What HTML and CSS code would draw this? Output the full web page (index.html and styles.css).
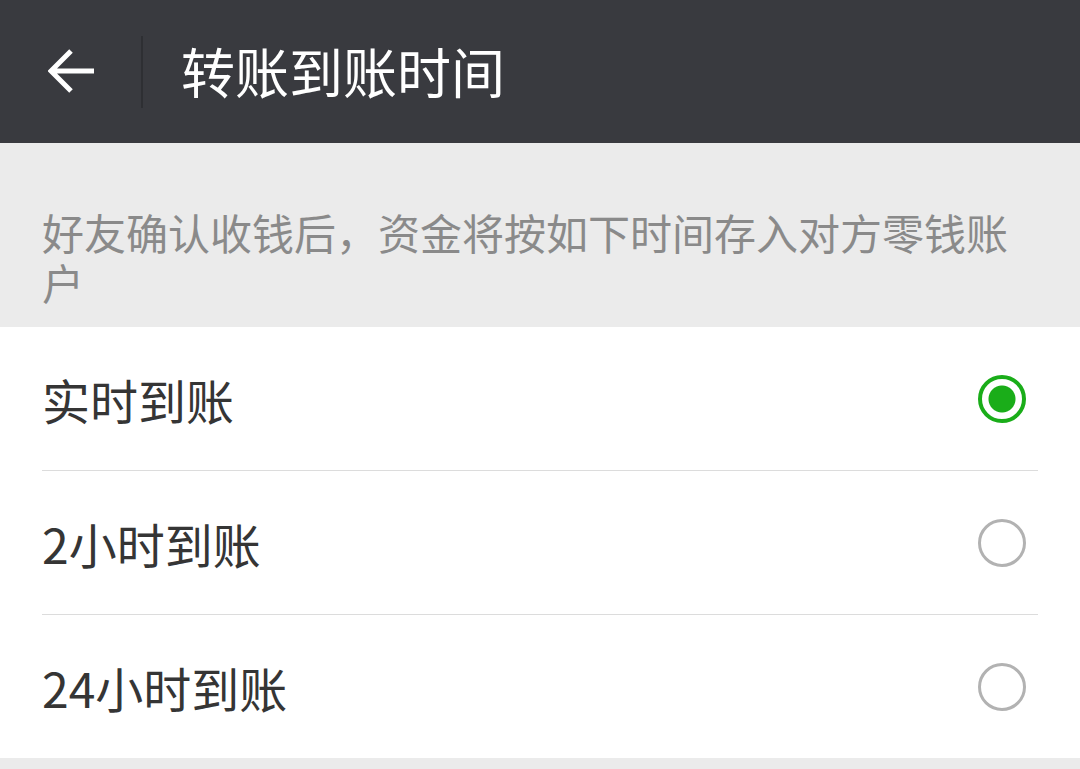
FILE: index.html
```html
<!DOCTYPE html>
<html lang="zh-CN">
<head>
<meta charset="utf-8">
<link rel="stylesheet" href="styles.css">
</head>
<body>
<header class="topbar">
  <svg class="back" width="48" height="48" viewBox="0 0 48 48">
    <path d="M46 24H4M23 4L3 24L23 44" fill="none" stroke="#fff" stroke-width="5" stroke-linecap="butt" stroke-linejoin="miter"/>
  </svg>
  <span class="sep"></span>
  <h1 class="title">转账到账时间</h1>
</header>
<p class="desc">好友确认收钱后，资金将按如下时间存入对方零钱账户</p>
<ul class="list">
  <li class="row"><span class="label">实时到账</span><span class="radio checked"></span></li>
  <li class="row"><span class="label">2小时到账</span><span class="radio"></span></li>
  <li class="row"><span class="label">24小时到账</span><span class="radio"></span></li>
</ul>
</body>
</html>
```
FILE: styles.css
```css
* { box-sizing: border-box; }
html, body { margin: 0; padding: 0; }
body {
  background: #ebebeb;
  font-family: "Noto Sans CJK SC", "Noto Sans", sans-serif;
  width: 1080px;
  height: 769px;
  overflow: hidden;
}
.topbar {
  height: 143px;
  background: #393a3f;
  display: flex;
  align-items: center;
  padding-left: 48px;
}
.back { display: block; flex: none; margin-top: -2px; }
.sep {
  width: 2px;
  height: 72px;
  background: #2e2f33;
  margin-left: 45px;
}
.title {
  margin: -2px 0 0 38px;
  color: #fff;
  font-size: 54px;
  font-weight: 400;
  line-height: 1;
}
.desc {
  margin: 0;
  padding: 64px 60px 20px 42px;
  font-size: 42px;
  line-height: 50px;
  color: #8a8a8a;
  height: 184px;
}
.list {
  list-style: none;
  margin: 0;
  padding: 0 0 0 42px;
  background: #fff;
}
.row {
  height: 144px;
  display: flex;
  align-items: center;
  justify-content: space-between;
  padding-right: 54px;
  position: relative;
}
.row:not(:last-child)::after {
  content: "";
  position: absolute;
  left: 0;
  right: 42px;
  bottom: 0;
  height: 1px;
  background: #dcdcdc;
}
.row:last-child { height: 143px; }
.label {
  font-size: 48px;
  color: #353535;
  line-height: 1;
}
.radio {
  width: 48px;
  height: 48px;
  border-radius: 50%;
  border: 3px solid #b2b2b2;
  flex: none;
}
.radio.checked {
  border: 4px solid #1aad19;
  background: radial-gradient(circle, #1aad19 0 13px, #fff 14px);
}
```
